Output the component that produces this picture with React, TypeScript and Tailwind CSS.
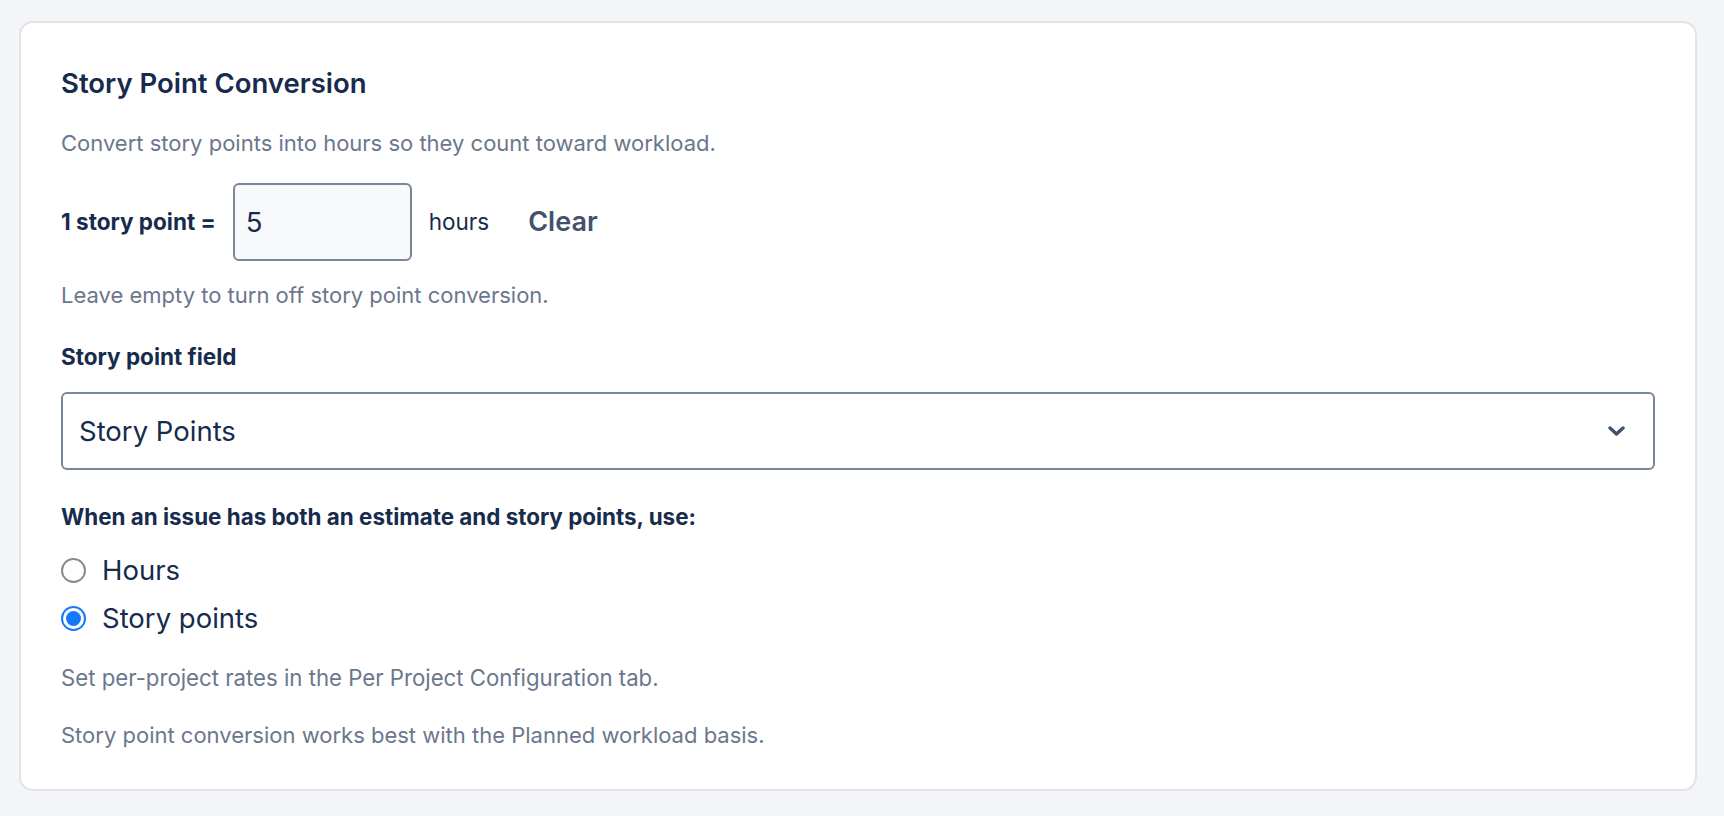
import { useState } from "react";

const Radio = ({
  checked,
  label,
  onSelect,
}: {
  checked: boolean;
  label: string;
  onSelect: () => void;
}) => (
  <label className="flex h-[48px] items-center gap-[16px] cursor-pointer" onClick={onSelect}>
    {checked ? (
      <span className="flex h-[25px] w-[25px] items-center justify-center rounded-full border-2 border-[#1479fd] bg-white">
        <span className="h-[15px] w-[15px] rounded-full bg-[#1479fd]" />
      </span>
    ) : (
      <span className="h-[25px] w-[25px] rounded-full border-2 border-[#8a8a8a] bg-white" />
    )}
    <span className="text-[27.5px] leading-[32px] text-[#172b4d]">{label}</span>
  </label>
);

export default function App() {
  const [rate, setRate] = useState("5");
  const [basis, setBasis] = useState<"hours" | "points">("points");

  return (
    <div className="min-h-screen bg-[#f4f5f7] pl-[19px] pr-[27px] pt-[21px] pb-[25px] font-['Inter',sans-serif]">
      <div className="flex flex-col rounded-[14px] border-2 border-[#e0e3e7] bg-white px-[40px] pt-[44px] pb-[40px]">
        {/* titulo */}
        <h2 className="text-[27.5px] leading-[32px] font-semibold text-[#172b4d]">
          Story Point Conversion
        </h2>
        <p className="mt-[30px] text-[22px] leading-[28px] text-[#6b778c]">
          Convert story points into hours so they count toward workload.
        </p>

        {/* fila de conversion */}
        <div className="mt-[26px] flex items-center">
          <span className="text-[22.5px] leading-[28px] font-bold text-[#172b4d]">1 story point =</span>
          <input
            value={rate}
            onChange={(e) => setRate(e.target.value)}
            className="ml-[17px] h-[78px] w-[179px] rounded-[6px] border-2 border-[#7a869a] bg-[#f7f9fb] pl-[11px] text-[27.5px] text-[#172b4d] outline-none"
          />
          <span className="ml-[17px] text-[22.5px] leading-[28px] text-[#172b4d]">hours</span>
          <button
            onClick={() => setRate("")}
            className="ml-[39px] text-[27px] leading-[32px] font-semibold text-[#42526e]"
          >
            Clear
          </button>
        </div>
        <p className="mt-[20px] text-[22px] leading-[28px] text-[#6b778c]">
          Leave empty to turn off story point conversion.
        </p>

        {/* campo */}
        <label className="mt-[34px] text-[22.5px] leading-[28px] font-bold text-[#172b4d]">
          Story point field
        </label>
        <div className="mt-[21px] flex h-[78px] items-center justify-between rounded-[6px] border-2 border-[#7a869a] bg-white pl-[16px] pr-[28px]">
          <span className="text-[27.5px] leading-[32px] text-[#172b4d]">Story Points</span>
          <svg width="17" height="10" viewBox="0 0 17 10" fill="none">
            <path d="M2 2l6.5 6L15 2" stroke="#42526e" strokeWidth="3.4" strokeLinecap="round" strokeLinejoin="round" />
          </svg>
        </div>

        {/* preferencia */}
        <p className="mt-[33px] text-[22.4px] leading-[28px] font-bold text-[#172b4d]">
          When an issue has both an estimate and story points, use:
        </p>
        <div className="mt-[15px] flex flex-col">
          <Radio checked={basis === "hours"} label="Hours" onSelect={() => setBasis("hours")} />
          <Radio checked={basis === "points"} label="Story points" onSelect={() => setBasis("points")} />
        </div>

        <p className="mt-[22px] text-[22.2px] leading-[28px] text-[#6b778c]">
          Set per-project rates in the Per Project Configuration tab.
        </p>
        <p className="mt-[29px] text-[22px] leading-[28px] text-[#6b778c]">
          Story point conversion works best with the Planned workload basis.
        </p>
      </div>
    </div>
  );
}
